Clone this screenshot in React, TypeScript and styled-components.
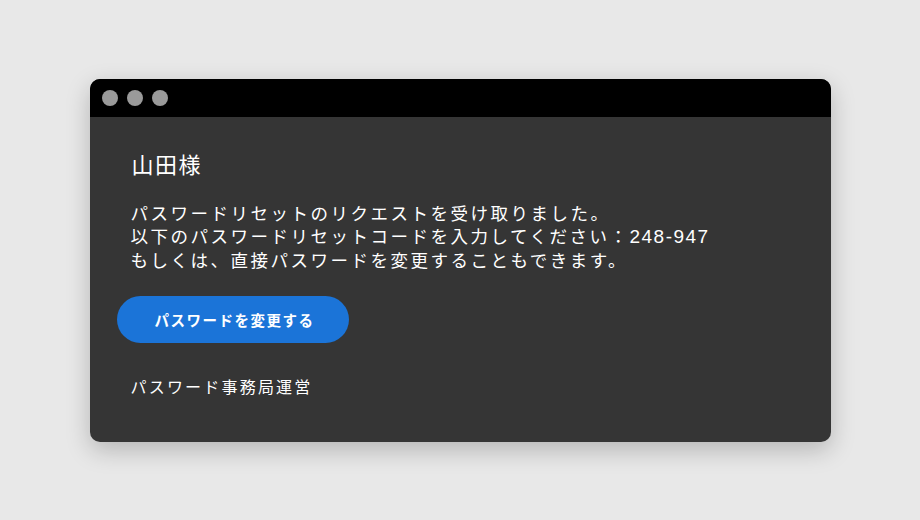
import { createGlobalStyle, styled } from "styled-components";

const GlobalStyle = createGlobalStyle`
  html, body {
    margin: 0;
    padding: 0;
    background: #e8e8e8;
    font-family: "Noto Sans CJK JP", "Noto Sans", sans-serif;
  }
`;

const Page = styled.div`
  width: 920px;
  height: 520px;
  display: flex;
  align-items: center;
  justify-content: center;
`;

const Window = styled.div`
  width: 741px;
  border-radius: 10px;
  overflow: hidden;
  background: #353535;
  box-shadow: 0 8px 24px rgba(0, 0, 0, 0.22);
`;

const TitleBar = styled.div`
  height: 38px;
  background: #000;
  display: flex;
  align-items: center;
  gap: 9px;
  padding-left: 12px;
`;

const Dot = styled.span`
  width: 16px;
  height: 16px;
  border-radius: 50%;
  background: #9a9a9a;
`;

const Body = styled.div`
  padding: 31px 41px 44px 42px;
  color: #fff;
  display: flex;
  flex-direction: column;
  align-items: flex-start;
`;

const Greeting = styled.div`
  font-size: 22px;
  line-height: 30px;
  letter-spacing: 1.5px;
`;

const Message = styled.p`
  margin: 23px 0 0 -1px;
  font-size: 17.5px;
  line-height: 23px;
  letter-spacing: 2.5px;
`;

const Code = styled.span`
  font-family: "Liberation Sans", Arial, sans-serif;
  font-size: 19px;
  letter-spacing: 1.5px;
`;

const Button = styled.button`
  margin: 25px 0 0 -15px;
  width: 232px;
  height: 47px;
  border: none;
  border-radius: 24px;
  background: #1b74d8;
  color: #fff;
  font-family: inherit;
  font-size: 14.5px;
  font-weight: 700;
  letter-spacing: 1.5px;
  padding: 0 0 0 4px;
  cursor: pointer;
`;

const Signature = styled.div`
  margin: 31px 0 0 -1px;
  font-size: 16px;
  line-height: 24px;
  letter-spacing: 2.2px;
`;

export default function App() {
  return (
    <Page>
      <GlobalStyle />
      <Window>
        <TitleBar>
          <Dot />
          <Dot />
          <Dot />
        </TitleBar>
        <Body>
          <Greeting>山田様</Greeting>
          <Message>
            パスワードリセットのリクエストを受け取りました。
            <br />
            以下のパスワードリセットコードを入力してください：<Code>248-947</Code>
            <br />
            もしくは、直接パスワードを変更することもできます。
          </Message>
          <Button>パスワードを変更する</Button>
          <Signature>パスワード事務局運営</Signature>
        </Body>
      </Window>
    </Page>
  );
}
